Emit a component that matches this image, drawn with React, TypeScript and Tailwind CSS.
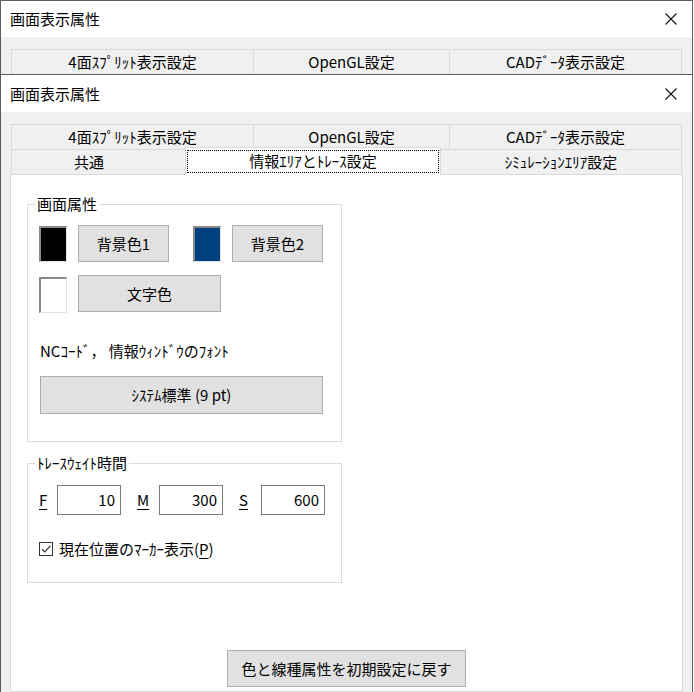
const font = "font-['Noto_Sans_CJK_JP','Noto_Sans',sans-serif]"

const TitleBar = () => (
  <div className="h-[37px] bg-white flex items-center justify-between pl-[9px] pr-[14px]">
    <span className="text-[15px] leading-[20px]">画面表示属性</span>
    <svg width="12" height="12" viewBox="0 0 12 12" className="mr-[1px]">
      <path d="M0.5 0.5 L11.5 11.5 M11.5 0.5 L0.5 11.5" stroke="#111" strokeWidth="1.1" fill="none" />
    </svg>
  </div>
)

const TopTabs = () => (
  <div className="flex h-[25px] text-[15px]">
    <div className="w-[242px] border-l border-t border-[#d9d9d9] flex items-center justify-center">4面ｽﾌﾟﾘｯﾄ表示設定</div>
    <div className="w-[196px] border-l border-t border-[#d9d9d9] flex items-center justify-center">OpenGL設定</div>
    <div className="w-[233px] border-l border-t border-r border-[#d9d9d9] flex items-center justify-center">CADﾃﾞｰﾀ表示設定</div>
  </div>
)

const Swatch = ({ color }: { color: string }) => (
  <div
    className={`w-[28px] h-[36px] mt-[1px] border-t-2 border-l-2 border-r border-b border-t-[#8a8a8a] border-l-[#8a8a8a] border-r-[#e3e3e3] border-b-[#e3e3e3] ${color}`}
  />
)

const Btn = ({ w, children }: { w: string; children: React.ReactNode }) => (
  <div className={`${w} h-[37px] bg-[#e1e1e1] border border-[#adadad] flex items-center justify-center text-[15px]`}>
    {children}
  </div>
)

const Field = ({ label, value, lw }: { label: string; value: string; lw: string }) => (
  <div className="flex items-center">
    <span className={`${lw} underline underline-offset-[3px]`}>{label}</span>
    <div className="w-[64px] h-[30px] border border-[#7a7a7a] bg-white flex items-center justify-end pr-[5px]">
      {value}
    </div>
  </div>
)

export default function App() {
  return (
    <div className={`w-[694px] h-[692px] overflow-hidden bg-white text-black ${font}`}>
      {/* back window, covered below y=74 */}
      <div className="w-[693px] h-[74px] overflow-hidden border-t border-l border-r border-[#5c5c5c] flex flex-col">
        <TitleBar />
        <div className="flex-1 bg-[#f0f0f0] pt-[12px] px-[10px]">
          <TopTabs />
        </div>
      </div>

      {/* front window */}
      <div className="w-[693px] h-[618px] border-t border-l border-r border-[#5c5c5c] flex flex-col">
        <TitleBar />
        <div className="flex-1 bg-[#f0f0f0] pt-[12px] px-[9px] flex flex-col">
          <div className="mx-[1px]">
            <TopTabs />
            <div className="flex h-[25px] text-[15px] items-start">
              <div className="w-[174px] h-[25px] border-l border-t border-[#d9d9d9] flex items-center justify-center pr-[19px]">共通</div>
              <div className="relative z-10 w-[256px] h-[28px] -mt-[2px] bg-white border-l border-t border-r border-[#d9d9d9] px-[1px] pt-[2px] pb-[2px] flex">
                <div className="flex-1 border border-dotted border-black flex items-center justify-center">
                  情報ｴﾘｱとﾄﾚｰｽ設定
                </div>
              </div>
              <div className="w-[241px] h-[25px] border-t border-r border-[#d9d9d9] flex items-center justify-center">ｼﾐｭﾚｰｼｮﾝｴﾘｱ設定</div>
            </div>
          </div>

          <div className="flex-1 bg-white border border-[#d9d9d9] px-[16px] pt-[29px] flex flex-col text-[15px] leading-[20px]">
            {/* 画面属性 */}
            <div className="relative w-[315px] h-[238px] border border-[#dcdcdc] pl-[11px] pt-[20px]">
              <span className="absolute -top-[11px] left-[7px] bg-white px-[2px]">画面属性</span>
              <div className="flex items-start">
                <Swatch color="bg-black" />
                <div className="ml-[11px]"><Btn w="w-[91px]">背景色1</Btn></div>
                <div className="ml-[24px]"><Swatch color="bg-[#003f80]" /></div>
                <div className="ml-[11px]"><Btn w="w-[91px]">背景色2</Btn></div>
              </div>
              <div className="flex items-start mt-[13px]">
                <div className="mt-[1px]"><Swatch color="bg-white" /></div>
                <div className="ml-[11px]"><Btn w="w-[143px]">文字色</Btn></div>
              </div>
              <div className="mt-[28px] ml-[1px]">NCｺｰﾄﾞ， 情報ｳｨﾝﾄﾞｳのﾌｫﾝﾄ</div>
              <div className="mt-[15px] ml-[1px]">
                <div className="w-[283px] h-[38px] bg-[#e1e1e1] border border-[#adadad] flex items-center justify-center">
                  ｼｽﾃﾑ標準 (9 pt)
                </div>
              </div>
            </div>

            {/* ﾄﾚｰｽｳｪｲﾄ時間 */}
            <div className="relative w-[315px] h-[120px] mt-[21px] border border-[#dcdcdc] pl-[11px] pt-[21px]">
              <span className="absolute -top-[11px] left-[7px] bg-white px-[2px]">ﾄﾚｰｽｳｪｲﾄ時間</span>
              <div className="flex gap-[16px]">
                <Field label="F" value="10" lw="w-[18px]" />
                <Field label="M" value="300" lw="w-[22px]" />
                <Field label="S" value="600" lw="w-[22px]" />
              </div>
              <div className="flex items-center mt-[24px]">
                <div className="w-[14px] h-[14px] border border-[#333] bg-white flex items-center justify-center">
                  <svg width="12" height="12" viewBox="0 0 12 12">
                    <path d="M2 6.2 L4.8 9 L10.2 2.8" stroke="#222" strokeWidth="1.1" fill="none" />
                  </svg>
                </div>
                <span className="ml-[6px]">
                  現在位置のﾏｰｶｰ表示(<span className="underline underline-offset-[3px]">P</span>)
                </span>
              </div>
            </div>

            <div className="flex justify-center mt-[67px]">
              <Btn w="w-[239px]">色と線種属性を初期設定に戻す</Btn>
            </div>
          </div>
        </div>
      </div>
    </div>
  )
}
